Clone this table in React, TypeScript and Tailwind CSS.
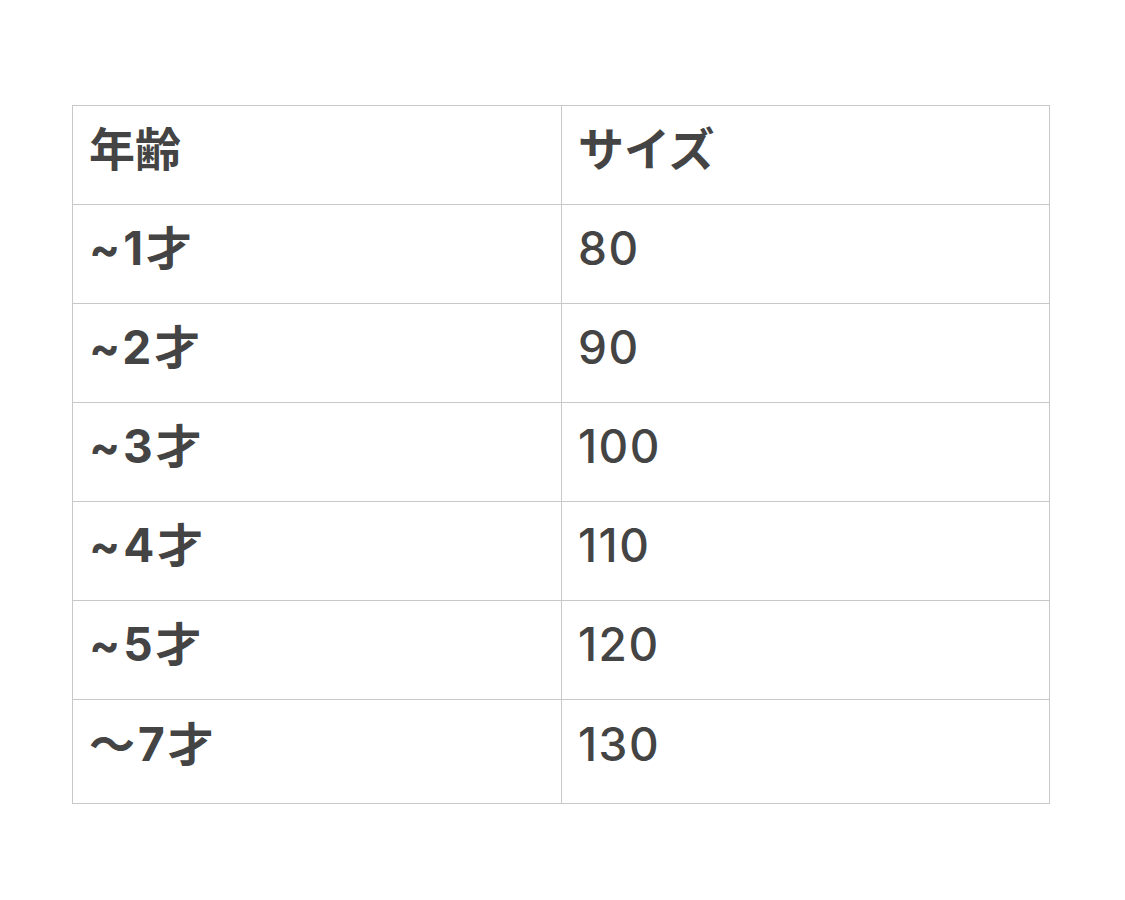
const rows = [
  { age: "~1才", size: "80" },
  { age: "~2才", size: "90" },
  { age: "~3才", size: "100" },
  { age: "~4才", size: "110" },
  { age: "~5才", size: "120" },
  { age: "～7才", size: "130" },
];

const cell = "border border-[#c8c8c8] px-4 align-middle text-[46px] leading-none";

export default function App() {
  return (
    <div className="min-h-[900px] bg-white pt-[105px] pl-[72px] font-['Inter','Noto_Sans_CJK_JP',sans-serif] text-[#444]">
      <table className="w-[978px] table-fixed border-collapse">
        <thead>
          <tr>
            <th className={`${cell} h-[99px] w-[489px] pb-3 text-left font-bold`}>年齢</th>
            <th className={`${cell} h-[99px] pb-3 text-left font-bold`}>サイズ</th>
          </tr>
        </thead>
        <tbody>
          {rows.map((r, i) => {
            const last = i === rows.length - 1;
            return (
              <tr key={r.size}>
                <td className={`${cell} ${last ? "h-[104px] pb-4" : "h-[99px] pb-3"} font-bold tracking-[3px]`}>
                  {r.age}
                </td>
                <td className={`${cell} ${last ? "h-[104px] pb-4" : "h-[99px] pb-3"} font-[550] tracking-[1.5px]`}>
                  {r.size}
                </td>
              </tr>
            );
          })}
        </tbody>
      </table>
    </div>
  );
}
